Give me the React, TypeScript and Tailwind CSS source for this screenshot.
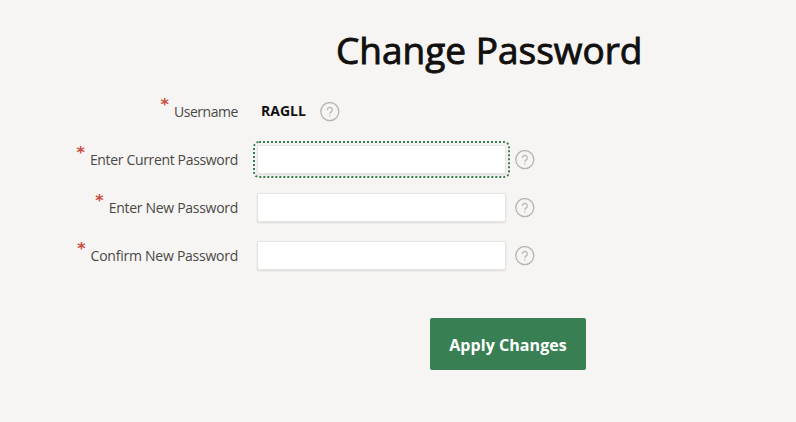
import type { ReactNode } from "react";

function HelpIcon() {
  return (
    <svg className="block shrink-0" width="20" height="20" viewBox="0 0 20 20" fill="none" stroke="#b5b4b3">
      <circle cx="9.8" cy="9.6" r="9" strokeWidth="1.3" />
      <path d="M7.3 7.9a2.5 2.5 0 1 1 4.1 1.9C10.4 10.6 9.8 10.9 9.8 12" strokeWidth="1.2" />
      <path d="M9.8 13.1v1.2" strokeWidth="1.2" />
    </svg>
  );
}

function Row({ label, tracking, children }: { label: string; tracking: string; children: ReactNode }) {
  return (
    <div className="flex h-12 items-center">
      <label className="flex w-[238px] items-center justify-end">
        <span className="mr-[5px] -mt-[15px] h-5 font-['DejaVu_Sans',sans-serif] text-[16px] leading-5 font-bold text-[#cf4a3e]">*</span>
        <span className={`text-[14px] leading-5 whitespace-nowrap text-[#4a4846] ${tracking}`}>{label}</span>
      </label>
      {children}
    </div>
  );
}

function Field({ focused = false }: { focused?: boolean }) {
  return (
    <>
      <input
        type="password"
        className={`mb-px ml-[19px] mr-[9px] h-[29px] w-[249px] rounded-[2px] border border-[#e6e3e1] bg-white shadow-[0_1px_2px_rgba(60,40,30,0.12)] ${
          focused ? "outline-2 outline-offset-2 outline-dotted outline-[#397f54]" : "outline-none"
        }`}
      />
      <HelpIcon />
    </>
  );
}

export default function App() {
  return (
    <main className="h-[422px] w-[796px] overflow-hidden bg-[#f6f5f3] font-['Open_Sans','Noto_Sans',sans-serif]">
      <h1 className="ml-[336px] pt-[23px] text-[37px] leading-[54px] font-medium whitespace-nowrap text-[#11100f] [-webkit-text-stroke:0.9px_#11100f]">
        Change Password
      </h1>
      <form className="mt-[11px]">
        <Row label="Username" tracking="tracking-[-0.45px]">
          <span className="mb-[2px] ml-[23px] w-[58.5px] text-[14px] leading-5 font-bold text-[#11100f]">RAGLL</span>
          <HelpIcon />
        </Row>
        <Row label="Enter Current Password" tracking="tracking-[-0.34px]">
          <Field focused />
        </Row>
        <Row label="Enter New Password" tracking="tracking-[-0.29px]">
          <Field />
        </Row>
        <Row label="Confirm New Password" tracking="tracking-[-0.25px]">
          <Field />
        </Row>
        <button
          type="button"
          className="mt-[38px] ml-[430px] block h-[52px] w-[156px] rounded-[2px] bg-[#397f54] pt-[2px] text-[16px] font-bold tracking-[0.06px] whitespace-nowrap text-white"
        >
          Apply Changes
        </button>
      </form>
    </main>
  );
}
